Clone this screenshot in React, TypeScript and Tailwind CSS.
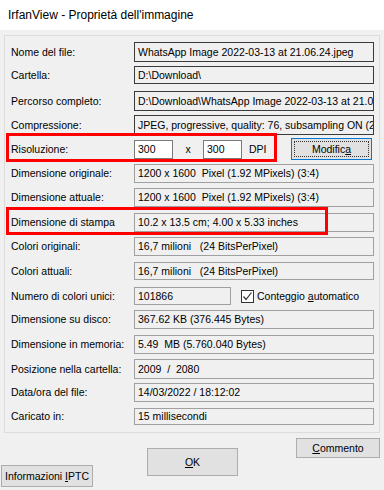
import React from "react";

const font = { fontFamily: '"Liberation Sans", Arial, sans-serif' };

function Label({ children }: { children: React.ReactNode }) {
  return <div className="w-[129px] shrink-0 pl-[6px] whitespace-nowrap">{children}</div>;
}

function Field({ children, dark, className }: { children: React.ReactNode; dark?: boolean; className: string }) {
  return (
    <div
      className={
        "flex items-center overflow-hidden whitespace-nowrap pl-[3px] border " +
        (dark ? "border-[#3a3a3a] " : "border-[#a0a0a0] ") +
        className
      }
    >
      {children}
    </div>
  );
}

export default function App() {
  return (
    <div
      className="relative w-[384px] h-[490px] bg-[#f0f0f0] overflow-hidden text-[10.5px] leading-none text-black"
      style={font}
    >
      <div className="h-[30px] bg-white flex items-center pl-[8px] text-[12px]">
        IrfanView - Proprietà dell'immagine
      </div>

      <div className="mx-[4px] mt-[5px] h-[398px] border border-[#dcdcdc] flex flex-col">
        <div className="flex items-center mt-[6px] h-[20px]">
          <Label>Nome del file:</Label>
          <Field dark className="w-[240px] h-[20px]">WhatsApp Image 2022-03-13 at 21.06.24.jpeg</Field>
        </div>
        <div className="flex items-center mt-[4px] h-[18px]">
          <Label>Cartella:</Label>
          <Field dark className="w-[240px] h-[18px]">D:\Download\</Field>
        </div>
        <div className="flex items-center mt-[7px] h-[20px]">
          <Label>Percorso completo:</Label>
          <Field dark className="w-[240px] h-[20px]">D:\Download\WhatsApp Image 2022-03-13 at 21.06.24.jpeg</Field>
        </div>
        <div className="flex items-center mt-[4px] h-[20px]">
          <Label>Compressione:</Label>
          <Field dark className="w-[240px] h-[20px]">JPEG, progressive, quality: 76, subsampling ON (2x2)</Field>
        </div>
        <div className="flex items-center mt-[3px] h-[22px]">
          <Label>Risoluzione:</Label>
          <div className="w-[39px] h-[19px] bg-white border border-[#7a7a7a] flex items-center pl-[3px]">300</div>
          <div className="w-[30px] text-center">x</div>
          <div className="w-[39px] h-[19px] bg-white border border-[#7a7a7a] flex items-center pl-[3px]">300</div>
          <div className="ml-[7px] w-[42px]">DPI</div>
          <div className="w-[81px] h-[22px] bg-[#e1e1e1] border border-[#0078d7] p-[2px]">
            <div className="w-full h-full border border-dotted border-[#333] flex items-center justify-center">
              Modific<span className="underline">a</span>
            </div>
          </div>
        </div>
        <div className="flex items-center mt-[4px] h-[19px]">
          <Label>Dimensione originale:</Label>
          <Field className="w-[240px] h-[19px]">1200 x 1600&nbsp; Pixel (1.92 MPixels) (3:4)</Field>
        </div>
        <div className="flex items-center mt-[5px] h-[19px]">
          <Label>Dimensione attuale:</Label>
          <Field className="w-[240px] h-[19px]">1200 x 1600&nbsp; Pixel (1.92 MPixels) (3:4)</Field>
        </div>
        <div className="flex items-center mt-[6px] h-[19px]">
          <Label>Dimensione di stampa</Label>
          <Field className="w-[240px] h-[19px]">10.2 x 13.5 cm; 4.00 x 5.33 inches</Field>
        </div>
        <div className="flex items-center mt-[5px] h-[19px]">
          <Label>Colori originali:</Label>
          <Field className="w-[240px] h-[19px]">16,7 milioni &nbsp;&nbsp;(24 BitsPerPixel)</Field>
        </div>
        <div className="flex items-center mt-[6px] h-[18px]">
          <Label>Colori attuali:</Label>
          <Field className="w-[240px] h-[18px]">16,7 milioni &nbsp;&nbsp;(24 BitsPerPixel)</Field>
        </div>
        <div className="flex items-center mt-[7px] h-[18px]">
          <Label>Numero di colori unici:</Label>
          <Field className="w-[97px] h-[18px]">101866</Field>
          <div className="ml-[10px] w-[13px] h-[13px] bg-white border border-[#333] flex items-center justify-center">
            <svg width="11" height="11" viewBox="0 0 11 11">
              <path d="M1.5 5.5 L4 8.5 L9.5 1.5" fill="none" stroke="#333" strokeWidth="1.2" />
            </svg>
          </div>
          <div className="ml-[3px] whitespace-nowrap">
            Conteggio <span className="underline">a</span>utomatico
          </div>
        </div>
        <div className="flex items-center mt-[5px] h-[19px]">
          <Label>Dimensione su disco:</Label>
          <Field className="w-[240px] h-[19px]">367.62 KB (376.445 Bytes)</Field>
        </div>
        <div className="flex items-center mt-[6px] h-[19px]">
          <Label>Dimensione in memoria:</Label>
          <Field className="w-[240px] h-[19px]">5.49&nbsp; MB (5.760.040 Bytes)</Field>
        </div>
        <div className="flex items-center mt-[5px] h-[20px]">
          <Label>Posizione nella cartella:</Label>
          <Field className="w-[240px] h-[20px]">2009&nbsp; /&nbsp; 2080</Field>
        </div>
        <div className="flex items-center mt-[4px] h-[19px]">
          <Label>Data/ora del file:</Label>
          <Field className="w-[240px] h-[19px]">14/03/2022 / 18:12:02</Field>
        </div>
        <div className="flex items-center mt-[6px] h-[17px]">
          <Label>Caricato in:</Label>
          <Field className="w-[240px] h-[17px]">15 millisecondi</Field>
        </div>
      </div>

      <div className="flex items-start">
        <div className="ml-[1px] mt-[32px] w-[92px] h-[22px] bg-[#e1e1e1] border border-[#adadad] flex items-center justify-center whitespace-nowrap">
          Informazioni&nbsp;<span className="underline">I</span>PTC
        </div>
        <div className="ml-[54px] mt-[15px] w-[91px] h-[28px] bg-[#e1e1e1] border border-[#adadad] flex items-center justify-center">
          <span className="underline">O</span>K
        </div>
        <div className="ml-[58px] mt-[5px] w-[84px] h-[20px] bg-[#e1e1e1] border border-[#adadad] flex items-center justify-center">
          <span className="underline">C</span>ommento
        </div>
      </div>

      <div className="absolute left-[6px] top-[133px] w-[271px] h-[29px] border-[3px] border-[#ff0000]" />
      <div className="absolute left-[6px] top-[207px] w-[322px] h-[28px] border-[3px] border-[#ff0000]" />
    </div>
  );
}
